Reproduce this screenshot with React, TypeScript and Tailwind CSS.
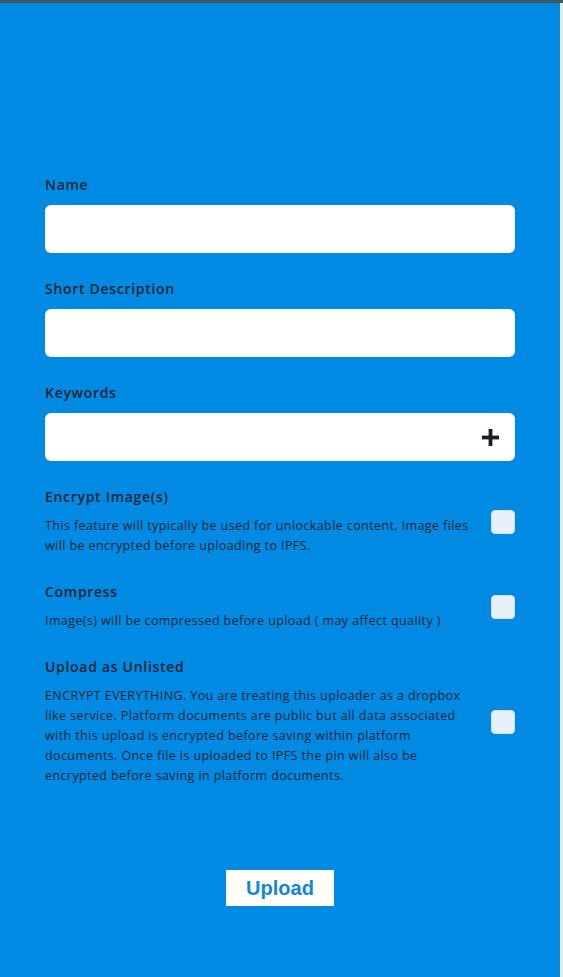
import { useState } from "react";

const font = { fontFamily: '"Open Sans", "DejaVu Sans", sans-serif' };

function PlusIcon() {
  return (
    <svg width="17" height="17" viewBox="0 0 17 17" className="shrink-0">
      <rect x="6.6" y="0" width="3.8" height="17" fill="#1b1e29" />
      <rect x="0" y="6.6" width="17" height="3.8" fill="#1b1e29" />
    </svg>
  );
}

function Field({ label, plus }: { label: string; plus?: boolean }) {
  const [value, setValue] = useState("");
  return (
    <div className="flex flex-col">
      <label className="h-5 leading-5 text-[14px] font-semibold tracking-[0.7px] text-[#1a2631] mb-2.5">{label}</label>
      <div className="flex items-center h-12 bg-white rounded-md pr-4">
        <input
          value={value}
          onChange={(e) => setValue(e.target.value)}
          className="flex-1 h-full px-3 bg-transparent outline-none text-sm"
        />
        {plus && <PlusIcon />}
      </div>
    </div>
  );
}

function Option({ title, text }: { title: string; text: string }) {
  const [on, setOn] = useState(false);
  return (
    <div className="flex items-center justify-between">
      <div className="flex flex-col">
        <div className="h-5 leading-5 text-[14px] font-semibold tracking-[0.7px] text-[#1a2631] mb-[9px]">{title}</div>
        <p className="w-[432px] text-[12.5px] leading-5 tracking-[0.4px] text-[#182633]">{text}</p>
      </div>
      <button
        onClick={() => setOn(!on)}
        className="w-6 h-6 rounded-[4px] bg-[#e8f0f9] border border-[#d6e2ee] shrink-0"
      />
    </div>
  );
}

export default function App() {
  return (
    <div className="w-[563px] min-h-[977px] flex flex-col bg-[#e3e8ee]" style={font}>
      <div className="h-[3px] bg-[#45565f] w-full" />
      <div className="flex flex-1">
        <div className="w-[560px] bg-[#018ae3] px-[45px] pt-[172px] pb-[71px] flex flex-col">
          <div className="flex flex-col gap-[26px]">
            <Field label="Name" />
            <Field label="Short Description" />
            <Field label="Keywords" plus />
            <Option
              title="Encrypt Image(s)"
              text="This feature will typically be used for unlockable content. Image files will be encrypted before uploading to IPFS."
            />
            <Option title="Compress" text="Image(s) will be compressed before upload ( may affect quality )" />
            <Option
              title="Upload as Unlisted"
              text="ENCRYPT EVERYTHING. You are treating this uploader as a dropbox like service. Platform documents are public but all data associated with this upload is encrypted before saving within platform documents. Once file is uploaded to IPFS the pin will also be encrypted before saving in platform documents."
            />
          </div>
          <div className="flex justify-center mt-[84px]">
            <button
              className="w-[108px] h-9 bg-white text-[#1384e0] text-[20px] font-bold"
              style={{ fontFamily: '"Liberation Sans", Arial, sans-serif' }}
            >
              Upload
            </button>
          </div>
        </div>
        <div className="flex-1" />
      </div>
    </div>
  );
}
